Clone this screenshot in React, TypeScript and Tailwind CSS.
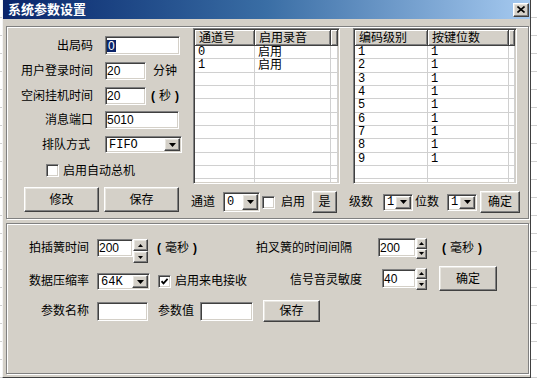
import React from 'react';

const cjk = "font-['Liberation_Sans','Noto_Sans_CJK_SC','Noto_Sans_CJK_JP',sans-serif]";
const sunken =
  'border border-t-[#808080] border-l-[#808080] border-b-white border-r-white shadow-[inset_1px_1px_0_#404040,inset_-1px_-1px_0_#d4d0c8] p-px';
const raised =
  'border border-t-white border-l-white border-b-[#404040] border-r-[#404040] shadow-[inset_-1px_-1px_0_#808080,inset_1px_1px_0_#e8e6e0] bg-[#d4d0c8]';
const etched = 'border border-[#808080] shadow-[inset_1px_1px_0_#ffffff,1px_1px_0_#ffffff]';

const DownArrow = () => (
  <svg width="7" height="4" viewBox="0 0 7 4">
    <path d="M0 0h7L3.5 4z" fill="#000" />
  </svg>
);

const SpinArrow = ({ up }: { up?: boolean }) => (
  <svg width="5" height="3" viewBox="0 0 5 3">
    <path d={up ? 'M0 3h5L2.5 0z' : 'M0 0h5L2.5 3z'} fill="#000" />
  </svg>
);

function Field({ className, value, selected }: { className: string; value?: string; selected?: boolean }) {
  return (
    <div className={`${sunken} bg-white flex items-center pl-[1px] text-[12px] leading-none font-['Liberation_Sans',sans-serif] ${className}`}>
      {selected ? <span className="bg-[#0a246a] text-white px-px">{value}</span> : value}
    </div>
  );
}

function Combo({ className, value }: { className: string; value: string }) {
  return (
    <div className={`${sunken} bg-white flex ${className}`}>
      <div className="flex-1 flex items-center pl-[2px] text-[12px] leading-none font-['Liberation_Mono',monospace] overflow-hidden">
        {value}
      </div>
      <div className={`${raised} w-[16px] h-full flex items-center justify-center`}>
        <DownArrow />
      </div>
    </div>
  );
}

function Spin({ className }: { className: string }) {
  return (
    <div className={`flex flex-col ${className}`}>
      <div className={`${raised} flex-1 flex items-center justify-center`}>
        <SpinArrow up />
      </div>
      <div className={`${raised} flex-1 flex items-center justify-center`}>
        <SpinArrow />
      </div>
    </div>
  );
}

function Btn({ className, label }: { className: string; label: string }) {
  return (
    <div className={`${raised} ${cjk} flex items-center justify-center text-[12px] text-black ${className}`}>
      {label}
    </div>
  );
}

function Check({ className, checked }: { className: string; checked?: boolean }) {
  return (
    <div className={`${sunken} bg-white w-[13px] h-[13px] flex items-center justify-center ${className}`}>
      {checked && (
        <svg width="7" height="7" viewBox="0 0 7 7">
          <path d="M0.5 3.2 L2.5 5.4 L6.6 0.8" stroke="#000" strokeWidth="1.8" fill="none" />
        </svg>
      )}
    </div>
  );
}

// "( 毫秒 )" style unit with narrow bold brackets
function Unit({ className, text }: { className: string; text: string }) {
  return (
    <span className={`${cjk} text-[12px] text-black whitespace-nowrap flex items-center ${className}`}>
      <span className="font-bold">(</span>
      <span className="mx-[4px]">{text}</span>
      <span className="font-bold">)</span>
    </span>
  );
}

const headerCell =
  'h-full flex items-center pl-[4px] text-[12px] leading-none border-r border-b border-r-[#404040] border-b-[#404040] shadow-[inset_1px_1px_0_#ffffff,inset_-1px_-1px_0_#808080] bg-[#d4d0c8] whitespace-nowrap overflow-hidden';

function ListView({
  className,
  cols,
  rows,
}: {
  className: string;
  cols: { label: string; w: string }[];
  rows: string[][];
}) {
  return (
    <div className={`${sunken} bg-white flex flex-col overflow-hidden ${cjk} ${className}`}>
      <div className="flex h-[16px] shrink-0">
        {cols.map((c) => (
          <div key={c.label} className={`${headerCell} ${c.w}`}>
            {c.label}
          </div>
        ))}
        <div className={`${headerCell} flex-1`} />
      </div>
      {Array.from({ length: 11 }).map((_, i) => (
        <div key={i} className="flex h-[13.33px] shrink-0 border-b border-[#d0d0d0]">
          {cols.map((c, j) => (
            <div
              key={j}
              className={`${c.w} h-full border-r border-[#d0d0d0] pl-[3px] text-[12px] leading-[12px] ${
                /^\d+$/.test(rows[i]?.[j] ?? '') ? "font-['Liberation_Mono',monospace]" : ''
              }`}
            >
              {rows[i]?.[j] ?? ''}
            </div>
          ))}
          <div className="flex-1 h-full border-r border-[#d0d0d0]" />
        </div>
      ))}
    </div>
  );
}

export default function App() {
  const label = `${cjk} text-[12px] text-black whitespace-nowrap`;
  return (
    <div className="w-[537px] h-[379px] overflow-hidden bg-white bg-[repeating-linear-gradient(to_bottom,transparent_0_17px,#d0d0d0_17px_18px)]">
      <div className="ml-[2px] w-[529px] h-[378px] flex flex-col bg-[#d4d0c8] border-r border-b border-r-[#404040] border-b-[#404040] border-l border-l-[#f4f4f4]">
        {/* title bar */}
        <div className="h-[19px] shrink-0 flex items-center pl-[5px] pr-[1px] bg-gradient-to-r from-[#0a246a] via-[#3a6ea5] to-[#a6caf0]">
          <span className={`${cjk} text-[13px] font-bold text-white leading-none`}>系统参数设置</span>
          <div className={`${raised} ml-auto w-[16px] h-[14px] flex items-center justify-center`}>
            <svg width="8" height="7" viewBox="0 0 8 7">
              <path d="M0.5 0.5 L7.5 6.5 M7.5 0.5 L0.5 6.5" stroke="#000" strokeWidth="1.6" />
            </svg>
          </div>
        </div>

        {/* top group */}
        <div className={`${etched} ml-[3px] mt-[7px] w-[523px] h-[193px] flex`}>
          {/* left column */}
          <div className="w-[179px] flex flex-col">
            <div className="mt-[9px] flex items-center h-[19px]">
              <span className={`${label} w-[86px] text-right`}>出局码</span>
              <Field className="ml-[12px] w-[75px] h-[19px]" value="0" selected />
            </div>
            <div className="mt-[7px] flex items-center h-[18px]">
              <span className={`${label} w-[86px] text-right`}>用户登录时间</span>
              <Field className="ml-[12px] w-[41px] h-[18px]" value="20" />
              <span className={`${label} ml-[7px]`}>分钟</span>
            </div>
            <div className="mt-[7px] flex items-center h-[18px]">
              <span className={`${label} w-[86px] text-right`}>空闲挂机时间</span>
              <Field className="ml-[12px] w-[41px] h-[18px]" value="20" />
              <Unit className="ml-[5px]" text="秒" />
            </div>
            <div className="mt-[6px] flex items-center h-[18px]">
              <span className={`${label} w-[86px] text-right`}>消息端口</span>
              <Field className="ml-[12px] w-[74px] h-[18px]" value="5010" />
            </div>
            <div className="mt-[7px] flex items-center h-[17px]">
              <span className={`${label} w-[83px] text-right`}>排队方式</span>
              <Combo className="ml-[15px] w-[77px] h-[17px]" value="FIFO" />
            </div>
            <div className="mt-[11px] flex items-center h-[13px]">
              <Check className="ml-[39px]" />
              <span className={`${label} ml-[4px]`}>启用自动总机</span>
            </div>
            <div className="mt-[10px] flex items-center h-[25px]">
              <Btn className="ml-[17px] w-[75px] h-[25px]" label="修改" />
              <Btn className="ml-[5px] w-[75px] h-[25px]" label="保存" />
            </div>
          </div>

          {/* right area */}
          <div className="flex flex-col">
            <div className="mt-[1px] flex">
              <ListView
                className="ml-[7px] w-[147px] h-[156px]"
                cols={[
                  { label: '通道号', w: 'w-[60px]' },
                  { label: '启用录音', w: 'w-[76px]' },
                ]}
                rows={[
                  ['0', '启用'],
                  ['1', '启用'],
                ]}
              />
              <ListView
                className="ml-[13px] w-[164px] h-[156px]"
                cols={[
                  { label: '编码级别', w: 'w-[73px]' },
                  { label: '按键位数', w: 'w-[81px]' },
                ]}
                rows={['1', '2', '3', '4', '5', '6', '7', '8', '9'].map((n) => [n, '1'])}
              />
            </div>
            <div className="mt-[7px] flex items-center h-[22px]">
              <span className={`${label} ml-[5px] w-[24px]`}>通道</span>
              <Combo className="ml-[8px] w-[37px] h-[20px]" value="0" />
              <Check className="ml-[2px]" />
              <span className={`${label} ml-[6px] w-[24px]`}>启用</span>
              <Btn className="ml-[7px] w-[25px] h-[22px]" label="是" />
              <span className={`${label} ml-[12px] w-[24px]`}>级数</span>
              <Combo className="ml-[10px] w-[30px] h-[17px]" value="1" />
              <span className={`${label} ml-[2px] w-[24px]`}>位数</span>
              <Combo className="ml-[8px] w-[30px] h-[17px]" value="1" />
              <Btn className="ml-[3px] w-[40px] h-[22px]" label="确定" />
            </div>
          </div>
        </div>

        {/* bottom group */}
        <div className={`${etched} ml-[3px] mt-[4px] w-[523px] h-[151px] flex flex-col`}>
          <div className="mt-[14px] flex items-start h-[25px]">
            <span className={`${label} w-[82px] text-right mt-[1px] leading-[18px]`}>拍插簧时间</span>
            <Field className="ml-[8px] mt-[1px] w-[36px] h-[18px]" value="200" />
            <Spin className="mt-[1px] w-[15px] h-[24px]" />
            <Unit className="ml-[9px] mt-[1px] h-[18px] w-[44px]" text="毫秒" />
            <span className={`${label} ml-[55px] mt-[1px] leading-[18px] w-[98px]`}>拍叉簧的时间间隔</span>
            <Field className="ml-[24px] w-[38px] h-[19px]" value="200" />
            <Spin className="w-[11px] h-[21px]" />
            <Unit className="ml-[15px] mt-[1px] h-[18px] w-[44px]" text="毫秒" />
          </div>
          <div className="mt-[3px] flex items-start h-[25px]">
            <span className={`${label} w-[82px] text-right mt-[6px] leading-[18px]`}>数据压缩率</span>
            <Combo className="ml-[8px] mt-[7px] w-[53px] h-[17px]" value="64K" />
            <Check className="ml-[8px] mt-[9px]" checked />
            <span className={`${label} ml-[4px] mt-[6px] leading-[18px] w-[72px]`}>启用来电接收</span>
            <span className={`${label} ml-[43px] mt-[5px] leading-[18px] w-[72px]`}>信号音灵敏度</span>
            <Field className="ml-[20px] mt-[3px] w-[34px] h-[19px]" value="40" />
            <Spin className="mt-[2px] w-[11px] h-[22px]" />
            <Btn className="ml-[12px] w-[58px] h-[25px]" label="确定" />
          </div>
          <div className="mt-[9px] flex items-center h-[22px]">
            <span className={`${label} w-[82px] text-right`}>参数名称</span>
            <Field className="ml-[8px] w-[51px] h-[19px]" />
            <span className={`${label} ml-[10px] w-[36px]`}>参数值</span>
            <Field className="ml-[6px] w-[53px] h-[19px]" />
            <Btn className="ml-[10px] w-[57px] h-[22px]" label="保存" />
          </div>
        </div>
      </div>
    </div>
  );
}
